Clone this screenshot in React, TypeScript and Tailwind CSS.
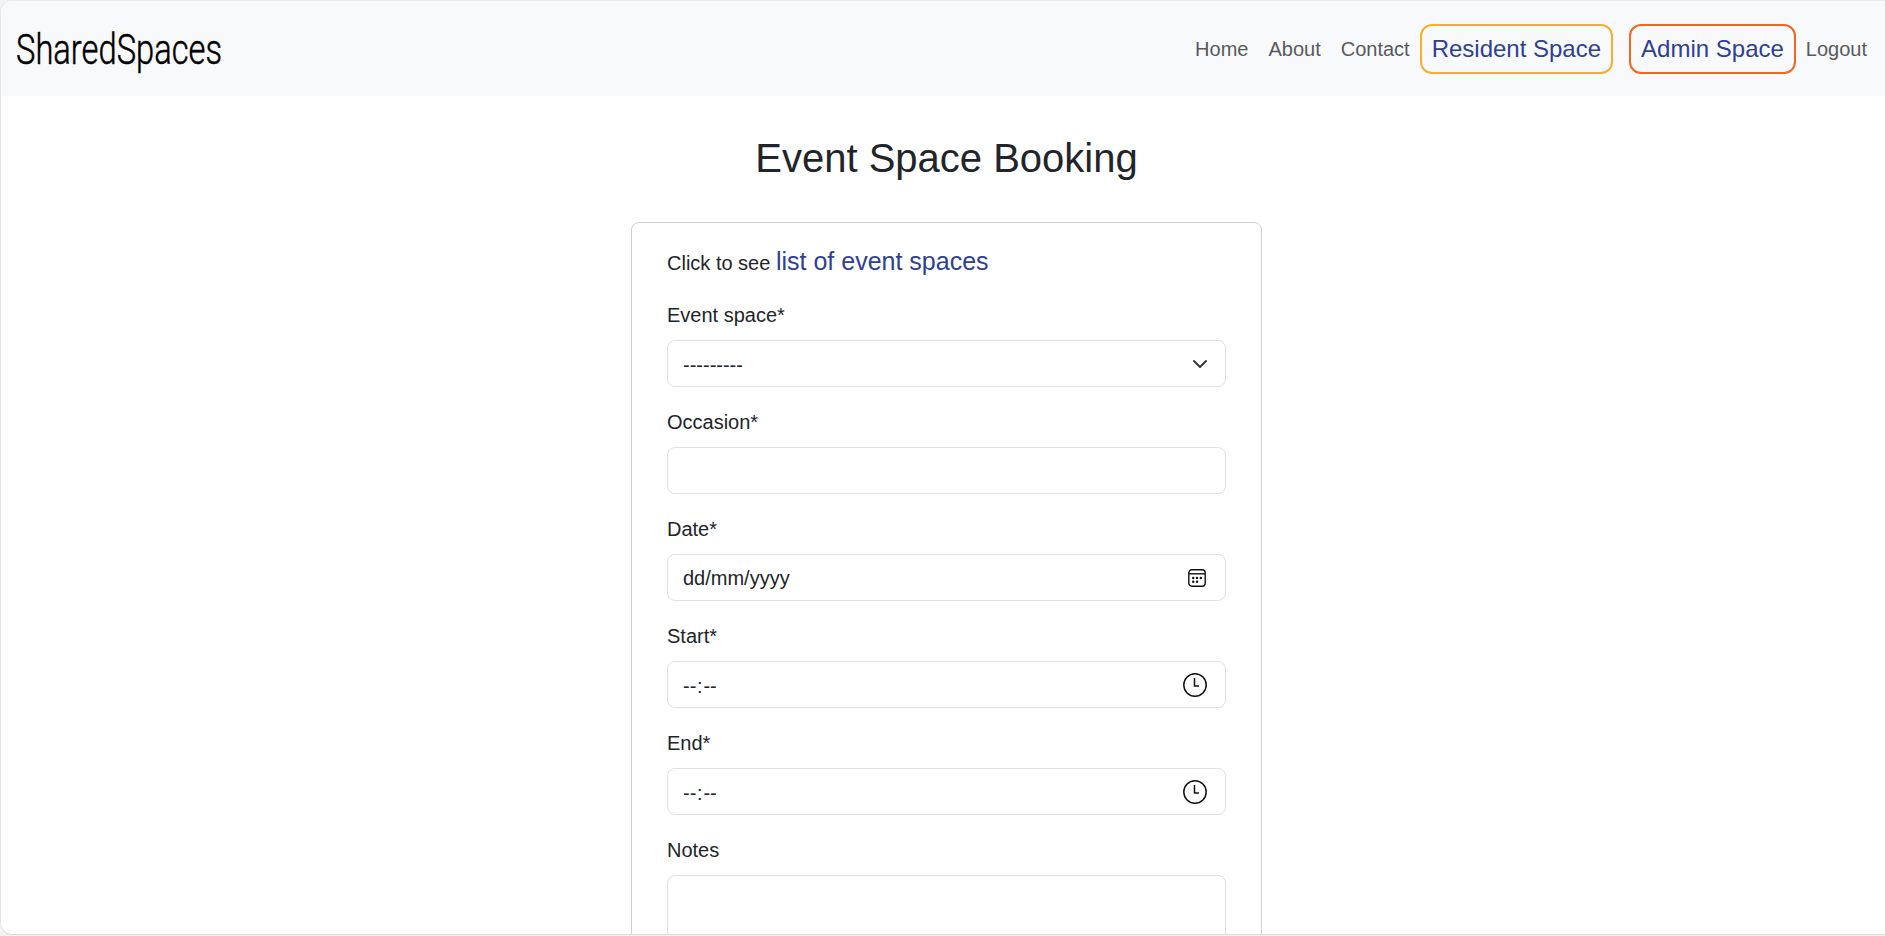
import type { ReactNode } from "react";

function NavLink({ children }: { children: ReactNode }) {
  return (
    <a href="#" className="px-[10px] text-[20px] leading-[30px] text-[#59595b]">
      {children}
    </a>
  );
}

function Field({ label, children }: { label: string; children?: ReactNode }) {
  return (
    <div className="mb-5">
      <div className="mb-[10px] h-[30px] text-[20px] leading-[30px]">{label}</div>
      <div className="flex h-[47px] items-center justify-between rounded-[8px] border border-[#dee2e6] bg-white pr-[18px] pl-[15px] text-[20px] leading-[30px]">
        {children}
      </div>
    </div>
  );
}

function EmptyTime() {
  return (
    <span className="flex pt-[2px]">
      <span>--</span>
      <span className="px-[0.75px]">:</span>
      <span>--</span>
    </span>
  );
}

function ChevronIcon() {
  return (
    <svg className="-mr-[1px]" width="16" height="16" viewBox="0 0 16 16" fill="none" stroke="#343a40" strokeWidth="2" strokeLinecap="round" strokeLinejoin="round">
      <path d="m2 5 6 6 6-6" />
    </svg>
  );
}

function CalendarIcon() {
  return (
    <svg className="mr-[1px]" width="18" height="18" viewBox="0 0 18 18" fill="none" stroke="#111" strokeWidth="1.4">
      <rect x="0.8" y="0.8" width="16.4" height="16.4" rx="3" />
      <path d="M1 4.8h16" />
      <g fill="#111" stroke="none">
        <circle cx="5.2" cy="9" r="1.2" />
        <circle cx="9" cy="9" r="1.2" />
        <circle cx="12.8" cy="9" r="1.2" />
        <circle cx="5.2" cy="12.8" r="1.2" />
        <circle cx="9" cy="12.8" r="1.2" />
      </g>
    </svg>
  );
}

function ClockIcon() {
  return (
    <svg width="24" height="24" viewBox="0 0 24 24" fill="none" stroke="#111" strokeWidth="1.5">
      <circle cx="12" cy="12" r="11.2" />
      <path d="M11.5 5v8H16" />
    </svg>
  );
}

export default function App() {
  return (
    <div className="h-[936px] overflow-hidden bg-[#f3f3f3] font-['Liberation_Sans',Arial,sans-serif] text-[#212529]">
      <div className="h-[935px] overflow-hidden rounded-l-[12px] border-y border-l border-t-[#e9eaec] border-b-[#dcdcdc] border-l-[#e6e7e9] bg-white">
        <header className="flex h-[95px] items-center justify-between bg-[#f8f9fb] pr-[8px] pl-[15px]">
          <svg width="206" height="50" className="overflow-visible" role="img">
            <text
              x="0"
              y="40"
              textLength="206"
              lengthAdjust="spacingAndGlyphs"
              strokeWidth="0.5"
              className="fill-black stroke-black font-[Roboto,sans-serif] text-[43px] font-light"
            >
              SharedSpaces
            </text>
          </svg>
          <nav className="flex items-center">
            <NavLink>Home</NavLink>
            <NavLink>About</NavLink>
            <NavLink>Contact</NavLink>
            <a href="#" className="mr-4 rounded-[12px] border-2 border-[#f9ae2b] px-[10px] py-[5px] text-[24px] leading-[36px] text-[#2e3f94]">
              Resident Space
            </a>
            <a href="#" className="rounded-[12px] border-2 border-[#f4661b] px-[10px] py-[5px] text-[24px] leading-[36px] text-[#2e3f94]">
              Admin Space
            </a>
            <NavLink>Logout</NavLink>
          </nav>
        </header>
        <main className="pl-[7px]">
          <h1 className="mt-[38px] text-center text-[40px] leading-[48px]">Event Space Booking</h1>
          <form className="mx-auto mt-[40px] h-[900px] w-[631px] rounded-[8px] border border-[#cfcfcf] px-[35px] pt-[19px]">
            <p className="mb-[20px] h-[38px] text-[20px] leading-[38px]">
              Click to see{" "}
              <a href="#" className="text-[25px] text-[#2e3f94]">
                list of event spaces
              </a>
            </p>
            <Field label="Event space*">
              <span className="pt-[2px]">---------</span>
              <ChevronIcon />
            </Field>
            <Field label="Occasion*" />
            <Field label="Date*">
              <span>dd/mm/yyyy</span>
              <CalendarIcon />
            </Field>
            <Field label="Start*">
              <EmptyTime />
              <ClockIcon />
            </Field>
            <Field label="End*">
              <EmptyTime />
              <ClockIcon />
            </Field>
            <div className="mb-[10px] h-[30px] text-[20px] leading-[30px]">Notes</div>
            <div className="h-[200px] rounded-[8px] border border-[#dee2e6]" />
          </form>
        </main>
      </div>
    </div>
  );
}
